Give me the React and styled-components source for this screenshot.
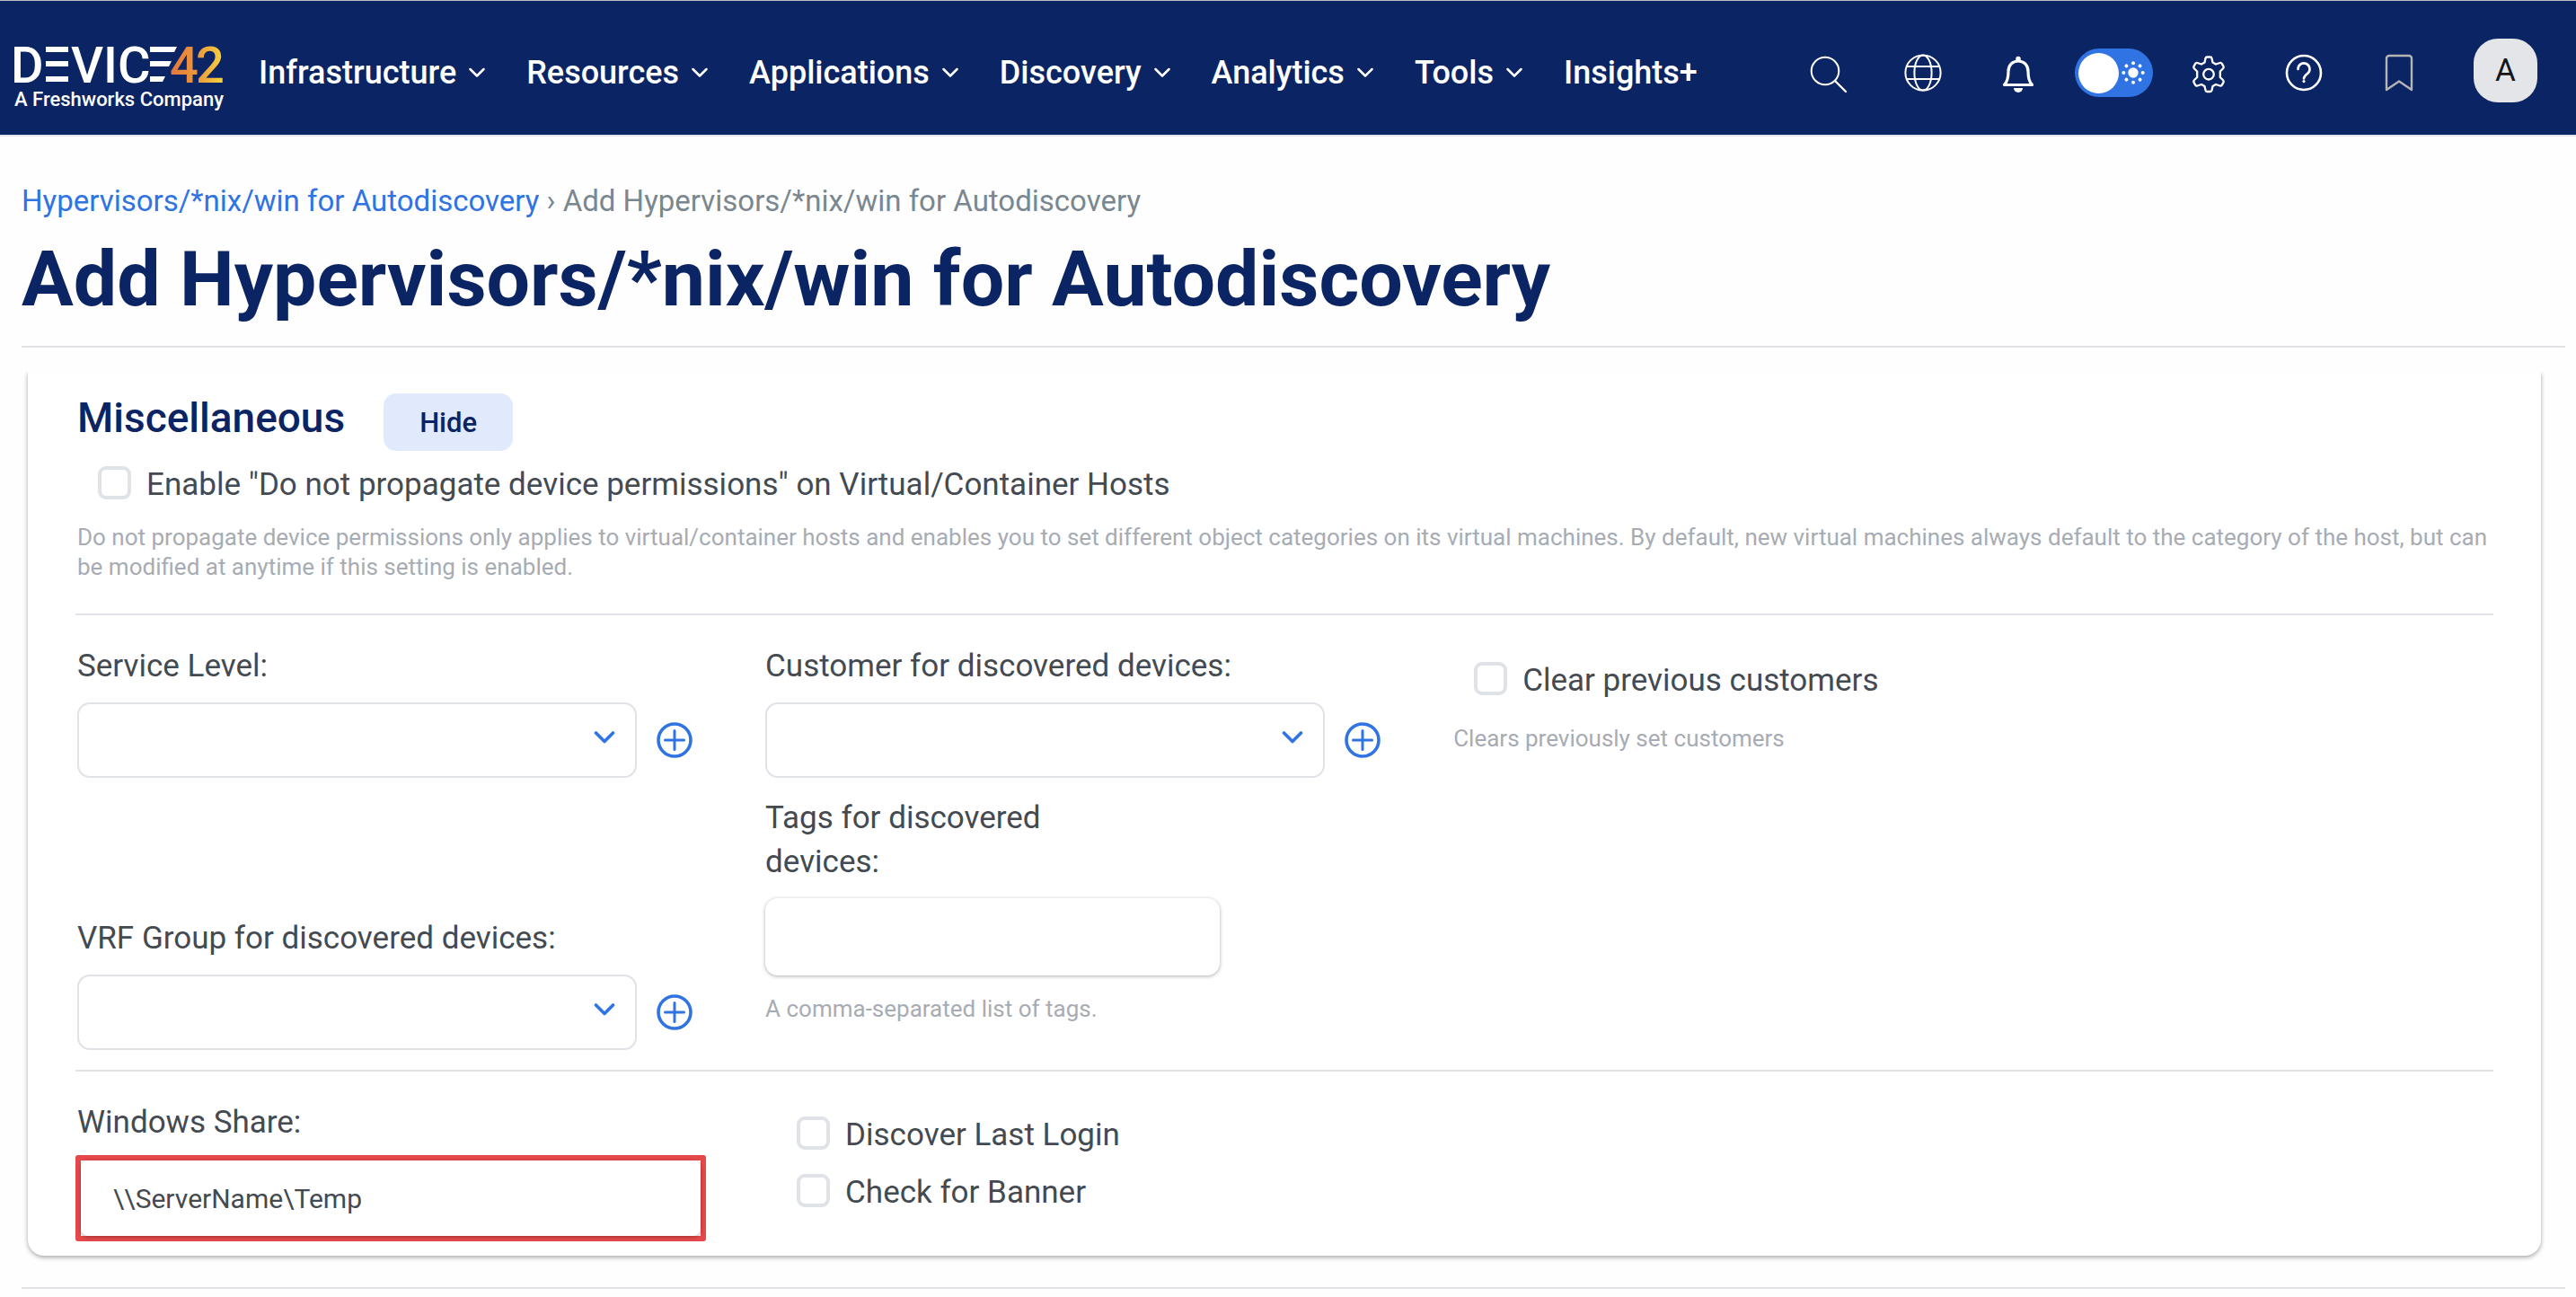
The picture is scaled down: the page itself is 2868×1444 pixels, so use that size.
import React from "react";
import styled, { createGlobalStyle } from "styled-components";

const navy = "#0b2463";
const blue = "#3073e2";
const line = "#dfe2e7";
const ink = "#444a52";
const muted = "#a7acb4";

const GlobalStyle = createGlobalStyle`
  *, *::before, *::after { box-sizing: border-box; }
  body {
    margin: 0;
    background: #fefefe;
    color: ${ink};
    font-family: Roboto, "Liberation Sans", sans-serif;
    font-size: 35px;
    line-height: 49px;
  }
  button, input, select { font: inherit; color: inherit; }
`;

/* ---------- top bar ---------- */

const TopBar = styled.header`
  display: flex;
  align-items: center;
  height: 152px;
  padding: 11px 43px 0 12px;
  background: ${navy};
  border-top: 1px solid #b9c0c6;
  border-bottom: 2px solid #e2e3e8;
  color: #fff;
`;

const Brand = styled.a`
  display: flex;
  flex-direction: column;
  gap: 4px;
  width: 240px;
  margin: 12px 36px 0 0;
  color: #fff;
  text-decoration: none;
`;

const BrandMark = styled.svg`
  display: block;
  width: 240px;
  height: 44px;
  overflow: visible;
  font-family: Roboto, sans-serif;
  font-size: 56px;
  font-weight: 500;
`;

const BrandTag = styled.span`
  padding-left: 4px;
  font-size: 22px;
  font-weight: 500;
  line-height: 26px;
  white-space: nowrap;
`;

const Nav = styled.nav`
  display: flex;
  gap: 46px;
`;

const NavButton = styled.button`
  display: flex;
  align-items: center;
  gap: 14px;
  padding: 0;
  border: 0;
  background: none;
  color: #fff;
  font-size: 36px;
  font-weight: 500;
  line-height: 42px;
  white-space: nowrap;
`;

const NavLink = styled(NavButton).attrs({ as: "a" })`
  text-decoration: none;
`;

const Tools = styled.div`
  display: grid;
  grid-auto-flow: column;
  grid-auto-columns: 106px;
  place-items: center;
  margin-left: auto;
`;

const IconButton = styled.button`
  display: flex;
  padding: 0;
  border: 0;
  background: none;
  color: ${(p) => (p.$dim ? "#b5b5b5" : "#fff")};
`;

const Switch = styled.label`
  position: relative;
  display: flex;

  input {
    appearance: none;
    display: flex;
    align-items: center;
    width: 87px;
    height: 54px;
    margin: 0;
    padding: 0 4px;
    border-radius: 27px;
    background: ${blue};
  }
  input::before {
    content: "";
    width: 45px;
    height: 45px;
    border-radius: 50%;
    background: #fff;
  }
  svg {
    position: absolute;
    right: 9px;
    top: 14px;
    pointer-events: none;
  }
`;

const Avatar = styled.button`
  width: 71px;
  height: 71px;
  margin: 0 0 5px 30px;
  padding: 0;
  border: 0;
  border-radius: 27px;
  background: #e4e5e9;
  color: #15171a;
  font-size: 35px;
`;

/* ---------- page ---------- */

const Page = styled.main`
  padding: 52px 12px 8px 24px;
`;

const Crumbs = styled.nav`
  color: #7a8791;
  font-size: 33px;
  line-height: 40px;

  a {
    color: ${blue};
    text-decoration: none;
  }
`;

const Title = styled.h1`
  margin: 16px 0 24px;
  color: ${navy};
  font-size: 86px;
  font-weight: 700;
  line-height: 101px;
`;

const Rule = styled.hr`
  height: 2px;
  margin: 0;
  border: 0;
  background: ${line};
`;

const Card = styled.section`
  margin: 27px 27px 35px 7px;
  padding: 24px 53px 16px;
  border-radius: 0 0 18px 18px;
  background: #fff;
  box-shadow: 0 2px 5px rgba(0, 0, 0, 0.34);
  clip-path: inset(0 -20px -20px -20px);
`;

const Group = styled.div`
  padding: ${(p) => p.$pad};
`;

const CardHead = styled.div`
  display: flex;
  align-items: flex-start;
  gap: 43px;
  margin-bottom: 13px;
`;

const CardTitle = styled.h2`
  margin: 0;
  color: ${navy};
  font-size: 46px;
  font-weight: 500;
  line-height: 54px;
`;

const HideButton = styled.button`
  height: 64px;
  padding: 0 40px;
  border: 0;
  border-radius: 14px;
  background: #e1eafd;
  color: ${navy};
  font-size: 31px;
  font-weight: 500;
`;

const Help = styled.p`
  margin: ${(p) => p.$top}px 0 0;
  color: ${muted};
  font-size: 26px;
  line-height: 33px;
`;

const Columns = styled.div`
  display: grid;
  grid-template-columns: 28.5% 28.5% 1fr;
  row-gap: 20px;
`;

const Field = styled.div`
  align-self: ${(p) => (p.$end ? "end" : "start")};
  padding-bottom: ${(p) => (p.$tail ? "29px" : "0")};
`;

const FieldLabel = styled.label`
  display: block;
  max-width: ${(p) => (p.$narrow ? "360px" : "none")};
`;

const PickRow = styled.div`
  display: flex;
  align-items: center;
  gap: 22px;
  margin: 16px 81px 0 0;
`;

const PickBox = styled.div`
  position: relative;
  flex: 1;

  select {
    appearance: none;
    display: block;
    width: 100%;
    height: 84px;
    padding: 0 72px 0 24px;
    border: 2px solid ${line};
    border-radius: 14px;
    background: #fff;
  }
  svg {
    position: absolute;
    right: 24px;
    top: 31px;
    pointer-events: none;
  }
`;

const AddButton = styled.button`
  display: flex;
  padding: 0;
  border: 0;
  background: none;
  color: ${blue};
`;

const TextInput = styled.input`
  display: block;
  width: 100%;
  height: 86px;
  padding: 0 36px;
  border: 0;
  border-radius: 14px;
  background: #fff;
  font-size: 31px;
  box-shadow: 0 1px 4px rgba(0, 0, 0, 0.32);
`;

const TagsInput = styled(TextInput)`
  width: 66%;
  margin-top: 16px;
`;

const ShareInput = styled(TextInput)`
  height: 84px;
  border-radius: 8px;
  font-size: 30px;
`;

const Highlight = styled.div`
  margin: 12px 66px 0 -2px;
  border: 6px solid #e5484a;
  border-radius: 3px;
  background: #fff;
`;

const CheckLabel = styled.label`
  display: flex;
  align-items: center;
  gap: 17px;
  padding-left: ${(p) => (p.$deep ? "35px" : "23px")};
`;

const CheckBox = styled.input.attrs({ type: "checkbox" })`
  appearance: none;
  flex: none;
  width: 37px;
  height: 37px;
  margin: 0 0 4px;
  border: 4px solid ${line};
  border-radius: 9px;
  background: #fff;
`;

const CheckStack = styled.div`
  display: flex;
  flex-direction: column;
  gap: 15px;
  padding-top: ${(p) => p.$top}px;
`;

/* ---------- drawings ---------- */

const Icon = ({ children, ...rest }) => (
  <svg width="48" height="48" viewBox="0 0 48 48" fill="none" stroke="currentColor" strokeWidth="2" aria-hidden="true" {...rest}>
    {children}
  </svg>
);

const SearchIcon = () => (
  <Icon>
    <circle cx="21" cy="22" r="15.3" />
    <path d="M32 33l12 12" strokeWidth="2.4" strokeLinecap="round" />
  </Icon>
);

const GlobeIcon = () => (
  <Icon>
    <circle cx="24" cy="24" r="19.6" />
    <ellipse cx="24" cy="24" rx="9.6" ry="19.6" />
    <path d="M6 17h36M6 31h36" />
  </Icon>
);

const BellIcon = () => (
  <Icon strokeWidth="3.2" strokeLinejoin="round">
    <path d="M8.5 37.5c3-3 4.5-7 4.500-15 0-7 4.500-11.500 11-11.500s11 4.500 11 11.500c0 8 1.500 12 4.500 15z" />
    <path d="M22 11V8.500a2 2 0 0 1 4 0V11" strokeWidth="1.500" fill="currentColor" />
    <path d="M19 41h10a5 5 0 0 1-10 0z" fill="currentColor" stroke="none" />
  </Icon>
);

const GearIcon = () => (
  <Icon strokeWidth="2.3" strokeLinejoin="round">
    <path d="M20.500 8q.3-1.500 1.800-1.500h3.400q1.500 0 1.800 1.500l1 4.500 3.500 2 4.600-1.500q1.400-.4 2.200.9l1.700 3q.7 1.300-.4 2.300L36.800 22.500v6.500l3.300 3.300q1.100 1 .4 2.300l-1.700 3q-.8 1.300-2.200.9L32 37l-3.500 2-1 4.500q-.3 1.500-1.800 1.500h-3.400q-1.500 0-1.800-1.500l-1-4.500L16 37l-4.600 1.500q-1.400.4-2.200-.9l-1.700-3q-.7-1.300.4-2.300l3.300-3.300v-6.500L7.900 19.200q-1.100-1-.4-2.300l1.700-3q.8-1.300 2.200-.9l4.600 1.500 3.500-2z" />
    <circle cx="24" cy="25.700" r="5.800" />
  </Icon>
);

const HelpIcon = () => (
  <Icon strokeWidth="2.600">
    <circle cx="24" cy="24" r="19" />
    <path d="M17.500 20a6.500 6.500 0 1 1 10.500 5c-2.500 1.900-4 2.900-4 5.500" strokeLinecap="round" />
    <circle cx="24" cy="33.600" r="1.600" fill="currentColor" stroke="none" />
  </Icon>
);

const BookmarkIcon = () => (
  <Icon strokeWidth="2.400" strokeLinejoin="round">
    <path d="M10 43V8a3 3 0 0 1 3-3h22a3 3 0 0 1 3 3v35L24 33.500z" />
  </Icon>
);

const sunRays = [0, 45, 90, 135, 180, 225, 270, 315];
const SunIcon = () => (
  <svg width="26" height="26" viewBox="0 0 26 26" fill="#fff" aria-hidden="true">
    <circle cx="13" cy="13" r="5.700" />
    {sunRays.map((a) => (
      <circle key={a} cx="23.700" cy="13" r="2" transform={`rotate(${a} 13 13)`} />
    ))}
  </svg>
);

const NavChevron = () => (
  <svg width="18" height="12" viewBox="0 0 18 12" fill="none" stroke="#fff" strokeWidth="2.500" aria-hidden="true">
    <path d="M1.500 2L9 9.500 16.500 2" strokeLinecap="round" strokeLinejoin="round" />
  </svg>
);

const PickChevron = () => (
  <svg width="24" height="16" viewBox="0 0 24 16" fill="none" stroke={blue} strokeWidth="3.600" aria-hidden="true">
    <path d="M2.500 3L12 12.500 21.500 3" strokeLinecap="round" strokeLinejoin="round" />
  </svg>
);

const PlusIcon = () => (
  <svg width="40" height="40" viewBox="0 0 40 40" fill="none" stroke="currentColor" aria-hidden="true">
    <circle cx="20" cy="20" r="18" strokeWidth="3.600" />
    <path d="M20 9.500v21M9.500 20h21" strokeWidth="3" strokeLinecap="round" />
  </svg>
);

const Logo = () => (
  <BrandMark viewBox="0 0 240 44" role="img" aria-label="Device42">
    <defs>
      <linearGradient id="sunset" gradientUnits="userSpaceOnUse" x1="182" y1="0" x2="236" y2="0">
        <stop offset="0" stopColor="#e67a3c" />
        <stop offset="0.500" stopColor="#eb9a3c" />
        <stop offset="1" stopColor="#f7d23e" />
      </linearGradient>
    </defs>
    <g fill="#fff">
      <text x="0" y="42">D</text>
      <path d="M39 2h25v6H39zM39 18h25v6H39zM39 35h25v6H39z" />
      <text x="67" y="42">V</text>
      <text x="103" y="42">I</text>
      <text x="119" y="42">C</text>
      <path d="M155 2h30l-3 6h-27zM155 18h24l-3 6h-21zM155 35h17l-3 6h-14z" />
    </g>
    <g fill="url(#sunset)">
      <text x="177" y="42">4</text>
      <text x="206" y="42">2</text>
    </g>
  </BrandMark>
);

/* ---------- composed parts ---------- */

const PickField = ({ id, label, end }) => (
  <Field $end={end}>
    <FieldLabel htmlFor={id}>{label}</FieldLabel>
    <PickRow>
      <PickBox>
        <select id={id} defaultValue="">
          <option value=""></option>
        </select>
        <PickChevron />
      </PickBox>
      <AddButton type="button" aria-label="Add">
        <PlusIcon />
      </AddButton>
    </PickRow>
  </Field>
);

const Check = ({ id, deep, children }) => (
  <CheckLabel htmlFor={id} $deep={deep}>
    <CheckBox id={id} />
    {children}
  </CheckLabel>
);

const menus = ["Infrastructure", "Resources", "Applications", "Discovery", "Analytics", "Tools"];

export default function App() {
  return (
    <>
      <GlobalStyle />
      <TopBar>
        <Brand href="#">
          <Logo />
          <BrandTag>A Freshworks Company</BrandTag>
        </Brand>
        <Nav>
          {menus.map((m) => (
            <NavButton key={m} type="button">
              {m}
              <NavChevron />
            </NavButton>
          ))}
          <NavLink href="#">Insights+</NavLink>
        </Nav>
        <Tools>
          <IconButton type="button" aria-label="Search"><SearchIcon /></IconButton>
          <IconButton type="button" aria-label="Language"><GlobeIcon /></IconButton>
          <IconButton type="button" aria-label="Notifications"><BellIcon /></IconButton>
          <Switch>
            <input type="checkbox" role="switch" aria-label="Light theme" />
            <SunIcon />
          </Switch>
          <IconButton type="button" aria-label="Settings"><GearIcon /></IconButton>
          <IconButton type="button" aria-label="Help"><HelpIcon /></IconButton>
          <IconButton type="button" aria-label="Bookmarks" $dim><BookmarkIcon /></IconButton>
        </Tools>
        <Avatar type="button">A</Avatar>
      </TopBar>

      <Page>
        <Crumbs aria-label="Breadcrumb">
          <a href="#">Hypervisors/*nix/win for Autodiscovery</a> › Add Hypervisors/*nix/win for Autodiscovery
        </Crumbs>
        <Title>Add Hypervisors/*nix/win for Autodiscovery</Title>
        <Rule />

        <Card>
          <Group $pad="0 2px 35px">
            <CardHead>
              <CardTitle>Miscellaneous</CardTitle>
              <HideButton type="button">Hide</HideButton>
            </CardHead>
            <Check id="propagate">Enable "Do not propagate device permissions" on Virtual/Container Hosts</Check>
            <Help $top={18}>
              Do not propagate device permissions only applies to virtual/container hosts and enables you to set
              different object categories on its virtual machines. By default, new virtual machines always default to
              the category of the host, but can be modified at anytime if this setting is enabled.
            </Help>
          </Group>
          <Rule />

          <Group $pad="32px 2px 22px">
            <Columns>
              <PickField id="service" label="Service Level:" />
              <PickField id="customer" label="Customer for discovered devices:" />
              <CheckStack $top={16}>
                <Check id="clear">Clear previous customers</Check>
                <Help $top={9}>Clears previously set customers</Help>
              </CheckStack>
              <PickField id="vrf" label="VRF Group for discovered devices:" end />
              <Field $tail>
                <FieldLabel htmlFor="tags" $narrow>Tags for discovered devices:</FieldLabel>
                <TagsInput id="tags" type="text" />
                <Help $top={21}>A comma-separated list of tags.</Help>
              </Field>
            </Columns>
          </Group>
          <Rule />

          <Group $pad="32px 2px 0">
            <Columns>
              <Field>
                <FieldLabel htmlFor="share">Windows Share:</FieldLabel>
                <Highlight>
                  <ShareInput id="share" type="text" defaultValue={"\\\\ServerName\\Temp"} />
                </Highlight>
              </Field>
              <CheckStack $top={14}>
                <Check id="login" deep>Discover Last Login</Check>
                <Check id="banner" deep>Check for Banner</Check>
              </CheckStack>
            </Columns>
          </Group>
        </Card>
        <Rule />
      </Page>
    </>
  );
}
